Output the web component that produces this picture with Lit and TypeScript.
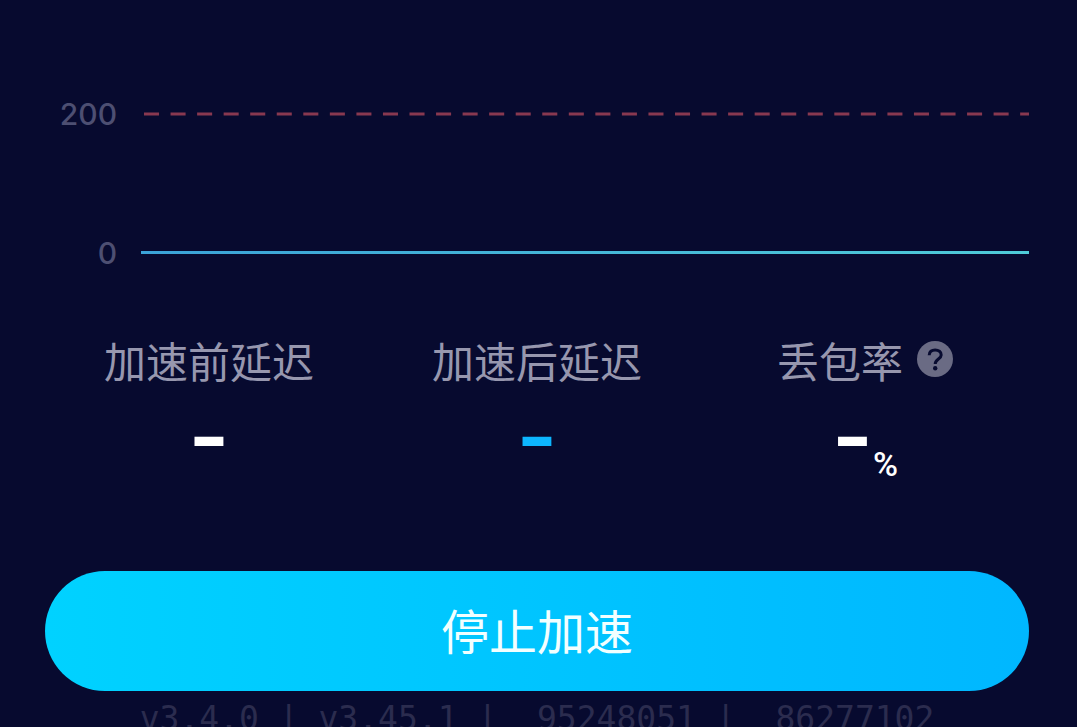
import { LitElement, html, css } from "lit";
import { customElement, property } from "lit/decorators.js";

@customElement("latency-chart")
class LatencyChart extends LitElement {
  static styles = css`
    :host {
      display: block;
    }
    .row {
      display: grid;
      grid-template-columns: 72px 1fr;
      column-gap: 24px;
      align-items: center;
      height: 40px;
    }
    .row + .row {
      margin-top: 99px;
    }
    .tick {
      font: 500 30px/40px Inter, sans-serif;
      color: #4d4f72;
      text-align: right;
    }
    .line {
      display: block;
      width: 100%;
      height: 4px;
    }
    .limit {
      padding-left: 3px;
    }
    .limit line {
      stroke: #883850;
      stroke-width: 3;
      stroke-dasharray: 17 13;
    }
  `;

  render() {
    return html`
      <div class="row">
        <span class="tick">200</span>
        <div class="limit">
          <svg class="line" aria-hidden="true">
            <line x1="0" y1="2" x2="100%" y2="2" pathLength="1000" />
          </svg>
        </div>
      </div>
      <div class="row">
        <span class="tick">0</span>
        <svg class="line" aria-hidden="true">
          <defs>
            <linearGradient id="trace">
              <stop offset="0" stop-color="#3ba3d8" />
              <stop offset="1" stop-color="#4fcbd8" />
            </linearGradient>
          </defs>
          <rect width="100%" height="3" fill="url(#trace)" />
        </svg>
      </div>
    `;
  }
}

@customElement("stat-item")
class StatItem extends LitElement {
  @property() label = "";
  @property() value = "-";
  @property() unit = "";
  @property({ type: Boolean }) accent = false;
  @property({ type: Boolean }) help = false;

  static styles = css`
    :host {
      display: flex;
      flex-direction: column;
      align-items: center;
      font-family: "Noto Sans CJK SC", sans-serif;
    }
    .label {
      display: flex;
      align-items: center;
      gap: 14px;
      font-size: 42px;
      line-height: 60px;
      color: #9797ae;
      white-space: nowrap;
    }
    .help {
      display: block;
      width: 36px;
      height: 36px;
      margin: 0 0 2px;
      padding: 0;
      border: 0;
      background: none;
    }
    .help svg {
      display: block;
    }
    .value {
      display: flex;
      align-items: flex-start;
      height: 82px;
      margin-top: 12px;
      font: 600 88px/68px Inter, sans-serif;
      color: #ffffff;
    }
    .accent {
      color: #0db6ff;
    }
    .unit {
      align-self: flex-end;
      font: 500 34px/40px Roboto, sans-serif;
    }
  `;

  render() {
    return html`
      <div class="label">
        <span>${this.label}</span>
        ${this.help
          ? html`<button class="help" aria-label=${this.label}>
              <svg width="36" height="36" viewBox="0 0 36 36" aria-hidden="true">
                <circle cx="18" cy="18" r="18" fill="#6a6b84" />
                <path
                  d="M12.2 14.2C12.2 10.6 14.7 8.9 18.1 8.9C21.6 8.9 24.2 10.9 24.2 13.9C24.2 18 18.2 18 18.2 23"
                  fill="none"
                  stroke="#080b30"
                  stroke-width="3"
                />
                <circle cx="18.2" cy="27.2" r="2.2" fill="#080b30" />
              </svg>
            </button>`
          : null}
      </div>
      <div class="value ${this.accent ? "accent" : ""}">
        <span>${this.value}</span>
        ${this.unit ? html`<span class="unit">${this.unit}</span>` : null}
      </div>
    `;
  }
}

@customElement("app-root")
class AppRoot extends LitElement {
  static styles = css`
    :host {
      display: block;
      box-sizing: border-box;
      height: 100vh;
      overflow: hidden;
      padding: 94px 48px 0 45px;
      background: #070a2f;
    }
    .stats {
      display: grid;
      grid-template-columns: repeat(3, 1fr);
      margin-top: 57px;
    }
    .stop {
      display: block;
      width: 100%;
      height: 120px;
      margin-top: 87px;
      padding: 0 0 4px;
      border: 0;
      border-radius: 60px;
      background: linear-gradient(90deg, #00d2ff, #00b7ff);
      color: #f2ffff;
      font: 400 48px/72px "Noto Sans CJK SC", sans-serif;
    }
    .versions {
      margin-top: 8px;
      text-align: center;
      white-space: pre;
      font: 33px/40px "DejaVu Sans Mono", monospace;
      color: #2b2c4e;
    }
  `;

  render() {
    return html`
      <latency-chart></latency-chart>
      <div class="stats">
        <stat-item label="加速前延迟"></stat-item>
        <stat-item label="加速后延迟" accent></stat-item>
        <stat-item label="丢包率" unit="%" help></stat-item>
      </div>
      <button class="stop">停止加速</button>
      <div class="versions">${"v3.4.0 | v3.45.1 |  95248051 |  86277102"}</div>
    `;
  }
}
